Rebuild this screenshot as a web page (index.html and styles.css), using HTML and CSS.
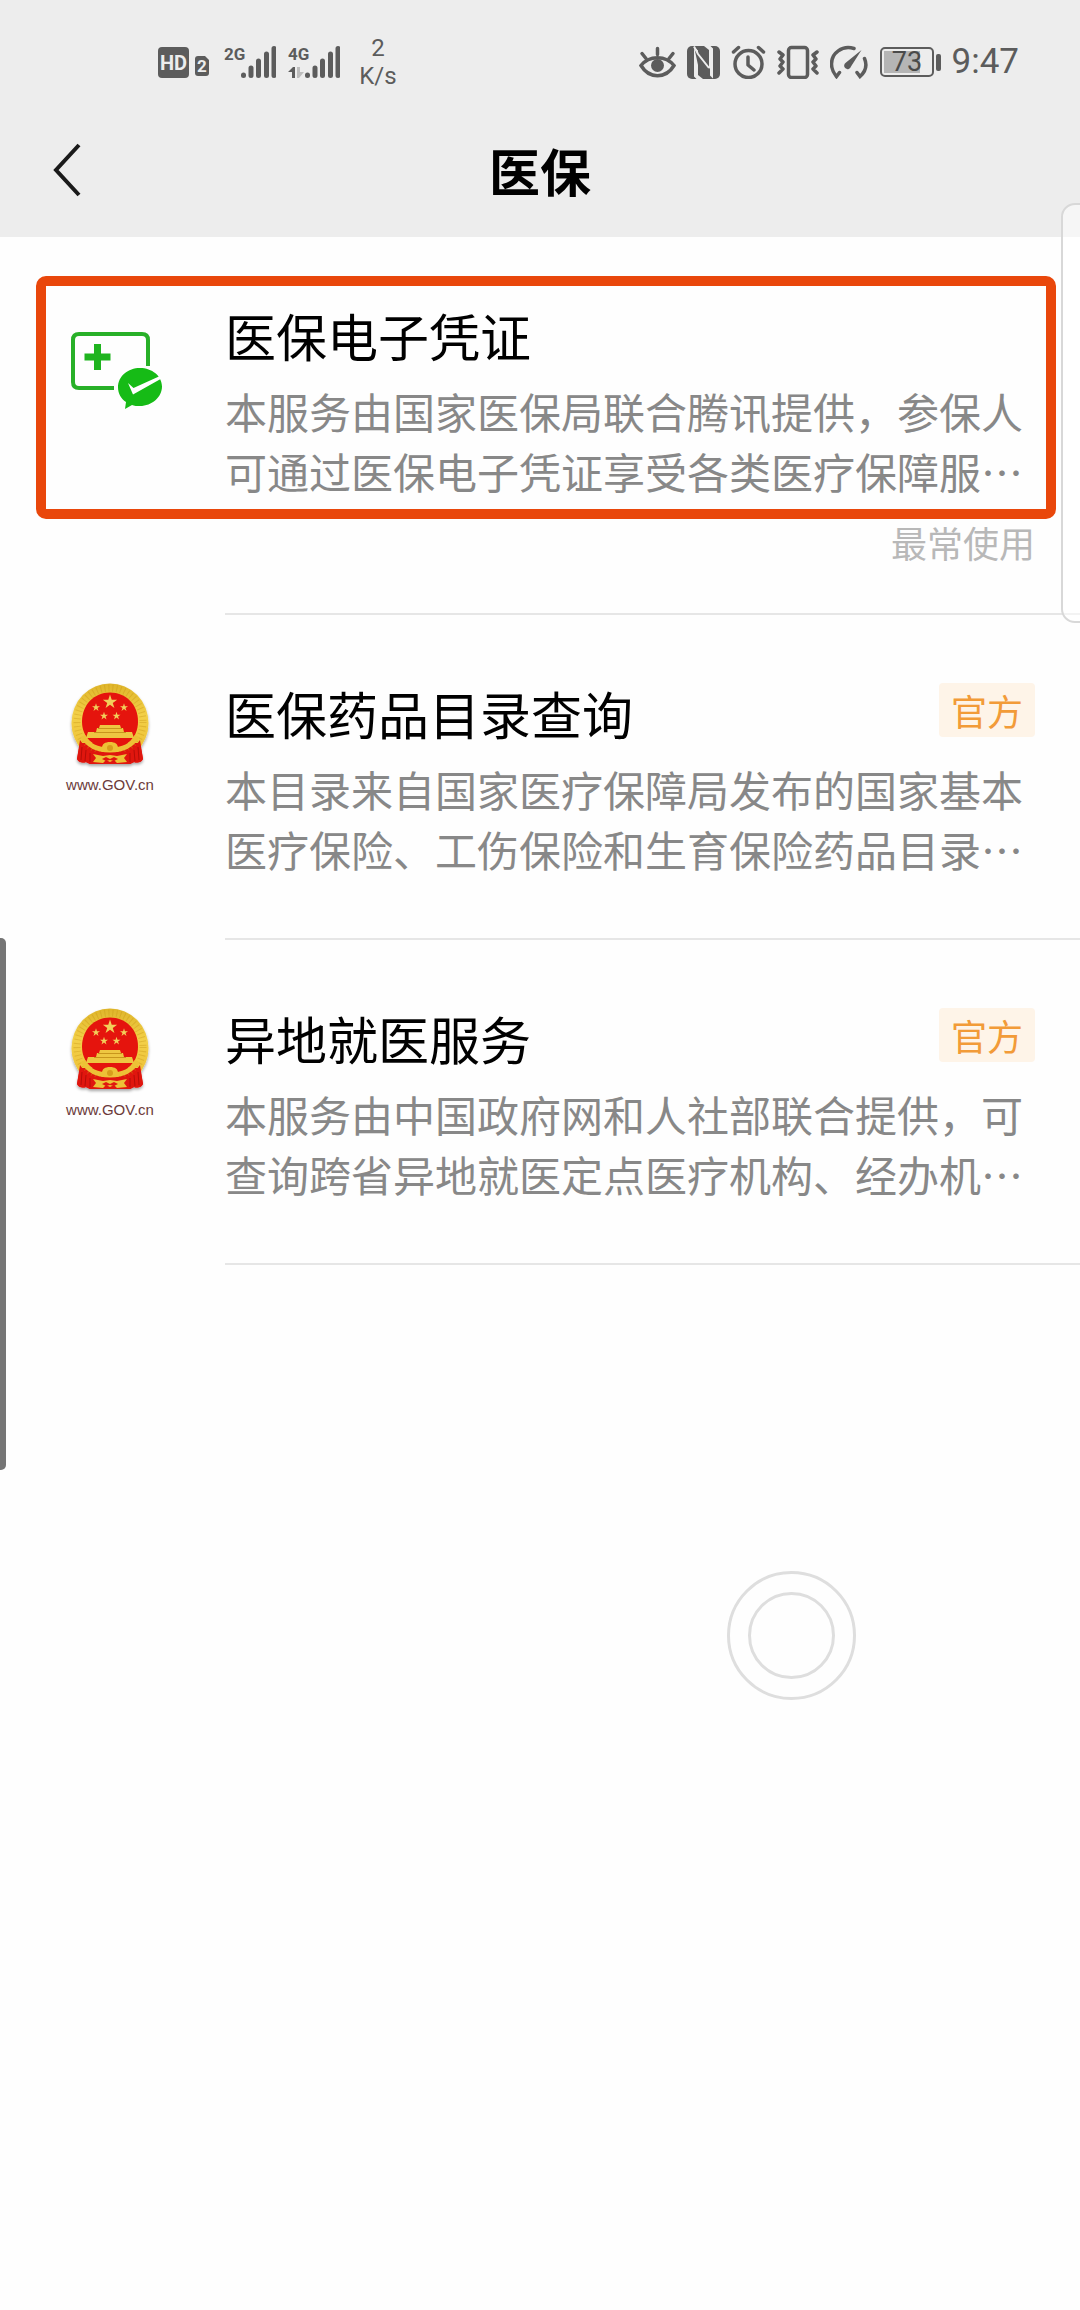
FILE: index.html
```html
<!DOCTYPE html>
<html lang="zh-CN">
<head>
    <meta charset="UTF-8">
    <meta name="viewport" content="width=device-width, initial-scale=1.0">
    <title>医保</title>
    <link rel="stylesheet" href="styles.css">
</head>
<body>

    <!-- Shared shapes -->
    <svg class="defs" width="0" height="0" aria-hidden="true">
        <defs>
            <polygon id="star" points="0,-10 2.3,-3.1 9.5,-3.1 3.7,1.2 5.9,8.1 0,3.8 -5.9,8.1 -3.7,1.2 -9.5,-3.1 -2.3,-3.1"/>
            <linearGradient id="gold" x1="0" y1="0" x2="0" y2="1">
                <stop offset="0" stop-color="#dfb52a"/>
                <stop offset="0.4" stop-color="#f3d048"/>
                <stop offset="1" stop-color="#ecbc30"/>
            </linearGradient>
            <filter id="shade" x="-20%" y="-20%" width="140%" height="140%">
                <feDropShadow dx="0" dy="2" stdDeviation="1.5" flood-color="#000" flood-opacity="0.35"/>
            </filter>
            <g id="bars" fill="none" stroke="#5c5c5c" stroke-width="5" stroke-linecap="round">
                <path d="M19.500 30v.5M27 23v7.500M34.500 16v14.500M42.500 9v21.500M50 3.500v27"/>
            </g>
            <g id="emblem">
                <g filter="url(#shade)">
                    <ellipse cx="54" cy="44" rx="38.500" ry="39.500" fill="url(#gold)"/>
                    <path d="M24 64h60l3 16c-2 4-6 4-9 3l-4 2H34l-4-2c-3 1-7 1-9-3z" fill="#e0160e"/>
                </g>
                <ellipse cx="54" cy="43" rx="33" ry="34" fill="none" stroke="#c99716" stroke-width="7" stroke-dasharray="1 3" opacity=".4"/>
                <path d="M24 61c3 5 8 10 14 12h32c6-2 11-7 14-12l3 19c-2 4-6 4-9 3l-4 2H34l-4-2c-3 1-7 1-9-3z" fill="#e0160e"/>
                <path d="M54 13.500c16 0 28 12 28 29S70 69 54 69 26 59 26 42.500s12-29 28-29z" fill="#e5140d"/>
                <path d="M27 57c5 10 15 14 27 14s22-4 27-14" fill="none" stroke="#edc136" stroke-width="5"/>
                <g fill="#f2cf5a">
                    <use href="#star" transform="translate(54 23) scale(.75)"/>
                    <use href="#star" transform="translate(40 28.500) scale(.42)"/>
                    <use href="#star" transform="translate(68 28.500) scale(.42)"/>
                    <use href="#star" transform="translate(48 37) scale(.42)"/>
                    <use href="#star" transform="translate(60.500 37) scale(.42)"/>
                </g>
                <path d="M44 46h20l1 3h2l1 4h8l2 6H30l2-6h8l1-4h2z" fill="#eec741"/>
                <path d="M42 49.500h24M38 53.500h32" stroke="#c8961c" stroke-width="1"/>
                <path d="M46 69c0-4 3-6 8-6s8 2 8 6l3 1-3 3H46l-3-3z" fill="#edc136"/>
                <circle cx="54" cy="69" r="3" fill="#d89d1c"/>
                <path d="M37 75l10 2 7-1 7 1 10-2-3 4 3 4-10 1-3-3-4 2-4-2-3 3-10-1 3-4z" fill="#edc136"/>
                <path d="M46 80l4-2 4 2 4-2 4 2-4 2-4-1-4 1z" fill="#e0160e"/>
                <path d="M26 68l-1 13M30 71l-1 11M34 74v9M74 74v9M78 71l1 11M82 68l1 13" stroke="#b50d08" stroke-width="1"/>
                <text x="54" y="111" text-anchor="middle" class="emblem-text">www.GOV.cn</text>
            </g>
        </defs>
    </svg>

    <header class="top">
        <!-- Status bar -->
        <div class="status">
            <div class="status-group">
                <svg width="55" height="34" viewBox="0 0 55 34">
                    <rect x="1" y="2" width="31" height="31" rx="4" fill="#5c5c5c"/>
                    <text x="16.500" y="25" text-anchor="middle" class="hd-text">HD</text>
                    <path d="M41 11h7l4 4v13q0 3-3 3h-8q-3 0-3-3V14q0-3 3-3z" fill="#5c5c5c"/>
                    <text x="45" y="27" text-anchor="middle" class="sim-text">2</text>
                </svg>
                <svg width="52" height="34" viewBox="0 0 52 34">
                    <text x="0" y="15" class="net-text">2G</text>
                    <use href="#bars"/>
                </svg>
                <svg width="52" height="34" viewBox="0 0 52 34">
                    <text x="0" y="15" class="net-text">4G</text>
                    <path d="M0 27l5-5h2v11H4v-6z" fill="#5c5c5c"/>
                    <path d="M9 22h3v5h4l-5 6H9z" fill="#bdbdbd"/>
                    <use href="#bars"/>
                </svg>
                <div class="speed">2<br>K/s</div>
            </div>
            <div class="status-group status-right">
                <svg width="37" height="34" viewBox="0 0 37 34" fill="none" stroke="#5c5c5c" stroke-width="3.500" stroke-linecap="round">
                    <path d="M2 20.500C10 10 27 10 35 20.500 27 34 10 34 2 20.500z"/>
                    <circle cx="18.500" cy="20.500" r="6.500" fill="#5c5c5c" stroke="none"/>
                    <path d="M18.500 3.500v6M3 8.500l4 5M34 8.500l-4 5"/>
                </svg>
                <svg width="33" height="34" viewBox="0 0 33 34">
                    <rect x="0" y="1" width="33" height="33" rx="5" fill="#5c5c5c"/>
                    <path d="M7 1.500l4 4V30l5 4H9.500L7 31.500z" fill="#ededed"/>
                    <path d="M17 1h6.500L26 3.500v30l-4-4V5z" fill="#ededed"/>
                    <path d="M7 1h7l8 7v16L11 11V5z" fill="#5c5c5c"/>
                    <path d="M7 1.500L11 9l12 15V34L11 20z" fill="#5c5c5c"/>
                    <path d="M7 1.500L11 9l11 14" fill="none" stroke="#ededed" stroke-width="2"/>
                </svg>
                <svg width="35" height="34" viewBox="0 0 35 34" fill="none" stroke="#5c5c5c" stroke-width="3.500" stroke-linecap="round" stroke-linejoin="round">
                    <circle cx="17.500" cy="19" r="13.500"/>
                    <path d="M17 12v8l6 5M2.500 7l5-4.500M32.500 7l-5-4.500"/>
                </svg>
                <svg width="42" height="34" viewBox="0 0 42 34" fill="none" stroke="#5c5c5c" stroke-width="3.500" stroke-linecap="round" stroke-linejoin="round">
                    <rect x="11.500" y="2.500" width="19" height="30" rx="3"/>
                    <path d="M2 7l4 3-3 4 3 3-3 4 3 3-4 4M40 7l-4 3 3 4-3 3 3 4-3 3 4 4"/>
                </svg>
                <svg width="39" height="34" viewBox="0 0 39 34" fill="none" stroke="#5c5c5c" stroke-width="3.500" stroke-linecap="round">
                    <path d="M24 3.500C12 0 1.500 8 1.500 19c0 6 2 9 5 12.500l3-4"/>
                    <path d="M34.500 13.500c3 7 1 13-4.500 18l-3-4"/>
                    <path d="M31.500 5L21 21.500a3.500 3.500 0 1 1-5-4z" fill="#5c5c5c" stroke="none"/>
                </svg>
                <svg width="61" height="34" viewBox="0 0 61 34">
                    <rect x="1" y="3" width="52" height="28" rx="4" fill="none" stroke="#5c5c5c" stroke-width="2"/>
                    <rect x="4" y="6" width="36" height="22" fill="#b5b5b5"/>
                    <rect x="56" y="9" width="5" height="17" rx="2" fill="#5c5c5c"/>
                    <text x="27" y="26" text-anchor="middle" class="battery-text">73</text>
                </svg>
                <span class="time">9:47</span>
            </div>
        </div>

        <!-- Title bar -->
        <div class="nav">
            <button class="back" type="button" aria-label="返回">
                <svg width="30" height="54" viewBox="0 0 30 54" fill="none" stroke="#1a1a1a" stroke-width="4">
                    <path d="M27 2L4 27l23 25"/>
                </svg>
            </button>
            <h1>医保</h1>
        </div>
    </header>

    <!-- Service list -->
    <main class="list">
        <a href="#" class="item featured">
            <svg class="icon" width="108" height="116" viewBox="0 0 108 116">
                <path d="M92 65V39q0-6-6-6H23q-6 0-6 6v42q0 6 6 6h35" fill="none" stroke="#28b028" stroke-width="4"/>
                <path d="M41.500 43v26M28.500 56h26" stroke="#1fb41f" stroke-width="7"/>
                <path d="M84 67c12 0 22 8 22 18.500S96 105 84 105c-3 0-6 0-8-1l-7 4 1-7c-5-3-8-9-8-14.500C62 75 72 67 84 67z" fill="#16bb16"/>
                <path d="M72 82l5.500 5L104 75l1.500 2.500L77 93.500z" fill="#fff"/>
            </svg>
            <div class="body">
                <div class="head">
                    <h2>医保电子凭证</h2>
                </div>
                <p class="desc">本服务由国家医保局联合腾讯提供，参保人可通过医保电子凭证享受各类医疗保障服…</p>
                <p class="note">最常使用</p>
            </div>
        </a>

        <a href="#" class="item">
            <svg class="icon" width="108" height="116" viewBox="0 0 108 116"><use href="#emblem"/></svg>
            <div class="body">
                <div class="head">
                    <h2>医保药品目录查询</h2>
                    <span class="tag">官方</span>
                </div>
                <p class="desc">本目录来自国家医疗保障局发布的国家基本医疗保险、工伤保险和生育保险药品目录…</p>
            </div>
        </a>

        <a href="#" class="item">
            <svg class="icon" width="108" height="116" viewBox="0 0 108 116"><use href="#emblem"/></svg>
            <div class="body">
                <div class="head">
                    <h2>异地就医服务</h2>
                    <span class="tag">官方</span>
                </div>
                <p class="desc">本服务由中国政府网和人社部联合提供，可查询跨省异地就医定点医疗机构、经办机…</p>
            </div>
        </a>
    </main>

    <!-- Floating things -->
    <div class="side-panel"></div>
    <div class="scroll-bar"></div>
    <div class="touch-dot"></div>

</body>
</html>
```

FILE: styles.css
```css
*, *::after {
    box-sizing: border-box;
}
body {
    position: relative;
    min-height: 100vh;
    margin: 0;
    overflow-x: hidden;
    background-color: #fefefe;
    color: #000;
    font-family: "Noto Sans CJK SC", sans-serif;
}
h1, h2, p {
    margin: 0;
}
svg {
    display: block;
    flex: none;
}
.defs {
    position: absolute;
}

/* header */
.top {
    background-color: #ededed;
}
.status {
    display: flex;
    justify-content: space-between;
    align-items: center;
    height: 124px;
    padding: 0 61px 0 157px;
    color: #5c5c5c;
    font-family: Roboto, sans-serif;
}
.status-group {
    display: flex;
    align-items: center;
    gap: 12px;
}
.status-right {
    gap: 11px;
}
.speed {
    width: 52px;
    font-size: 24px;
    line-height: 28px;
    text-align: center;
}
.time {
    font-size: 35px;
    line-height: 40px;
}
.hd-text {
    fill: #ededed;
    font: bold 20px Roboto, sans-serif;
}
.sim-text {
    fill: #ededed;
    font: bold 17px Roboto, sans-serif;
}
.net-text {
    fill: #5c5c5c;
    font: bold 17px Roboto, sans-serif;
}
.battery-text {
    fill: #4a4a4a;
    font: 27px Roboto, sans-serif;
}
.nav {
    display: grid;
    grid-template-columns: 120px 1fr 120px;
    align-items: center;
    height: 113px;
    padding-bottom: 21px;
}
.back {
    justify-self: start;
    padding: 0 0 0 52px;
    border: none;
    background: none;
    cursor: pointer;
}
h1 {
    font-size: 51px;
    line-height: 60px;
    font-weight: bold;
    text-align: center;
}

/* list */
.item {
    position: relative;
    display: flex;
    gap: 61px;
    padding: 64px 0 0 56px;
    color: inherit;
    text-decoration: none;
}
.body {
    flex: 1;
    min-width: 0;
    padding: 4px 45px 59px 0;
    border-bottom: 2px solid #e6e6e6;
}
.head {
    display: flex;
    justify-content: space-between;
    align-items: flex-start;
    margin-bottom: 16px;
}
h2 {
    font-size: 51px;
    line-height: 60px;
    font-weight: normal;
}
.tag {
    padding: 0 12px;
    border-radius: 4px;
    background-color: #fef4e8;
    color: #f29b38;
    font-size: 36px;
    line-height: 54px;
}
.desc {
    color: #888;
    font-size: 42px;
    line-height: 60px;
}
.note {
    margin-top: 20px;
    color: #b8b8b8;
    font-size: 36px;
    line-height: 42px;
    text-align: right;
}
.featured .body {
    padding-bottom: 50px;
}
/* frame around the first service */
.featured::after {
    content: "";
    position: absolute;
    top: 39px;
    right: 24px;
    left: 36px;
    height: 243px;
    border: 10px solid #e9470b;
    border-radius: 10px;
}
.emblem-text {
    fill: #6b3a3a;
    font: 15px "Liberation Sans", sans-serif;
}

/* overlays */
.side-panel {
    position: absolute;
    top: 203px;
    right: -2px;
    width: 21px;
    height: 420px;
    border: 2px solid #d8d8d8;
    border-radius: 14px 0 0 14px;
    background-color: rgba(255, 255, 255, 0.5);
}
.scroll-bar {
    position: absolute;
    top: 938px;
    left: 0;
    width: 6px;
    height: 532px;
    border-radius: 0 5px 5px 0;
    background-color: #757575;
}
.touch-dot {
    position: absolute;
    top: 1571px;
    right: 224px;
    width: 129px;
    height: 129px;
    border: 3px solid #dedede;
    border-radius: 50%;
}
.touch-dot::after {
    content: "";
    position: absolute;
    inset: 18px;
    border: 3px solid #dedede;
    border-radius: 50%;
}
```
